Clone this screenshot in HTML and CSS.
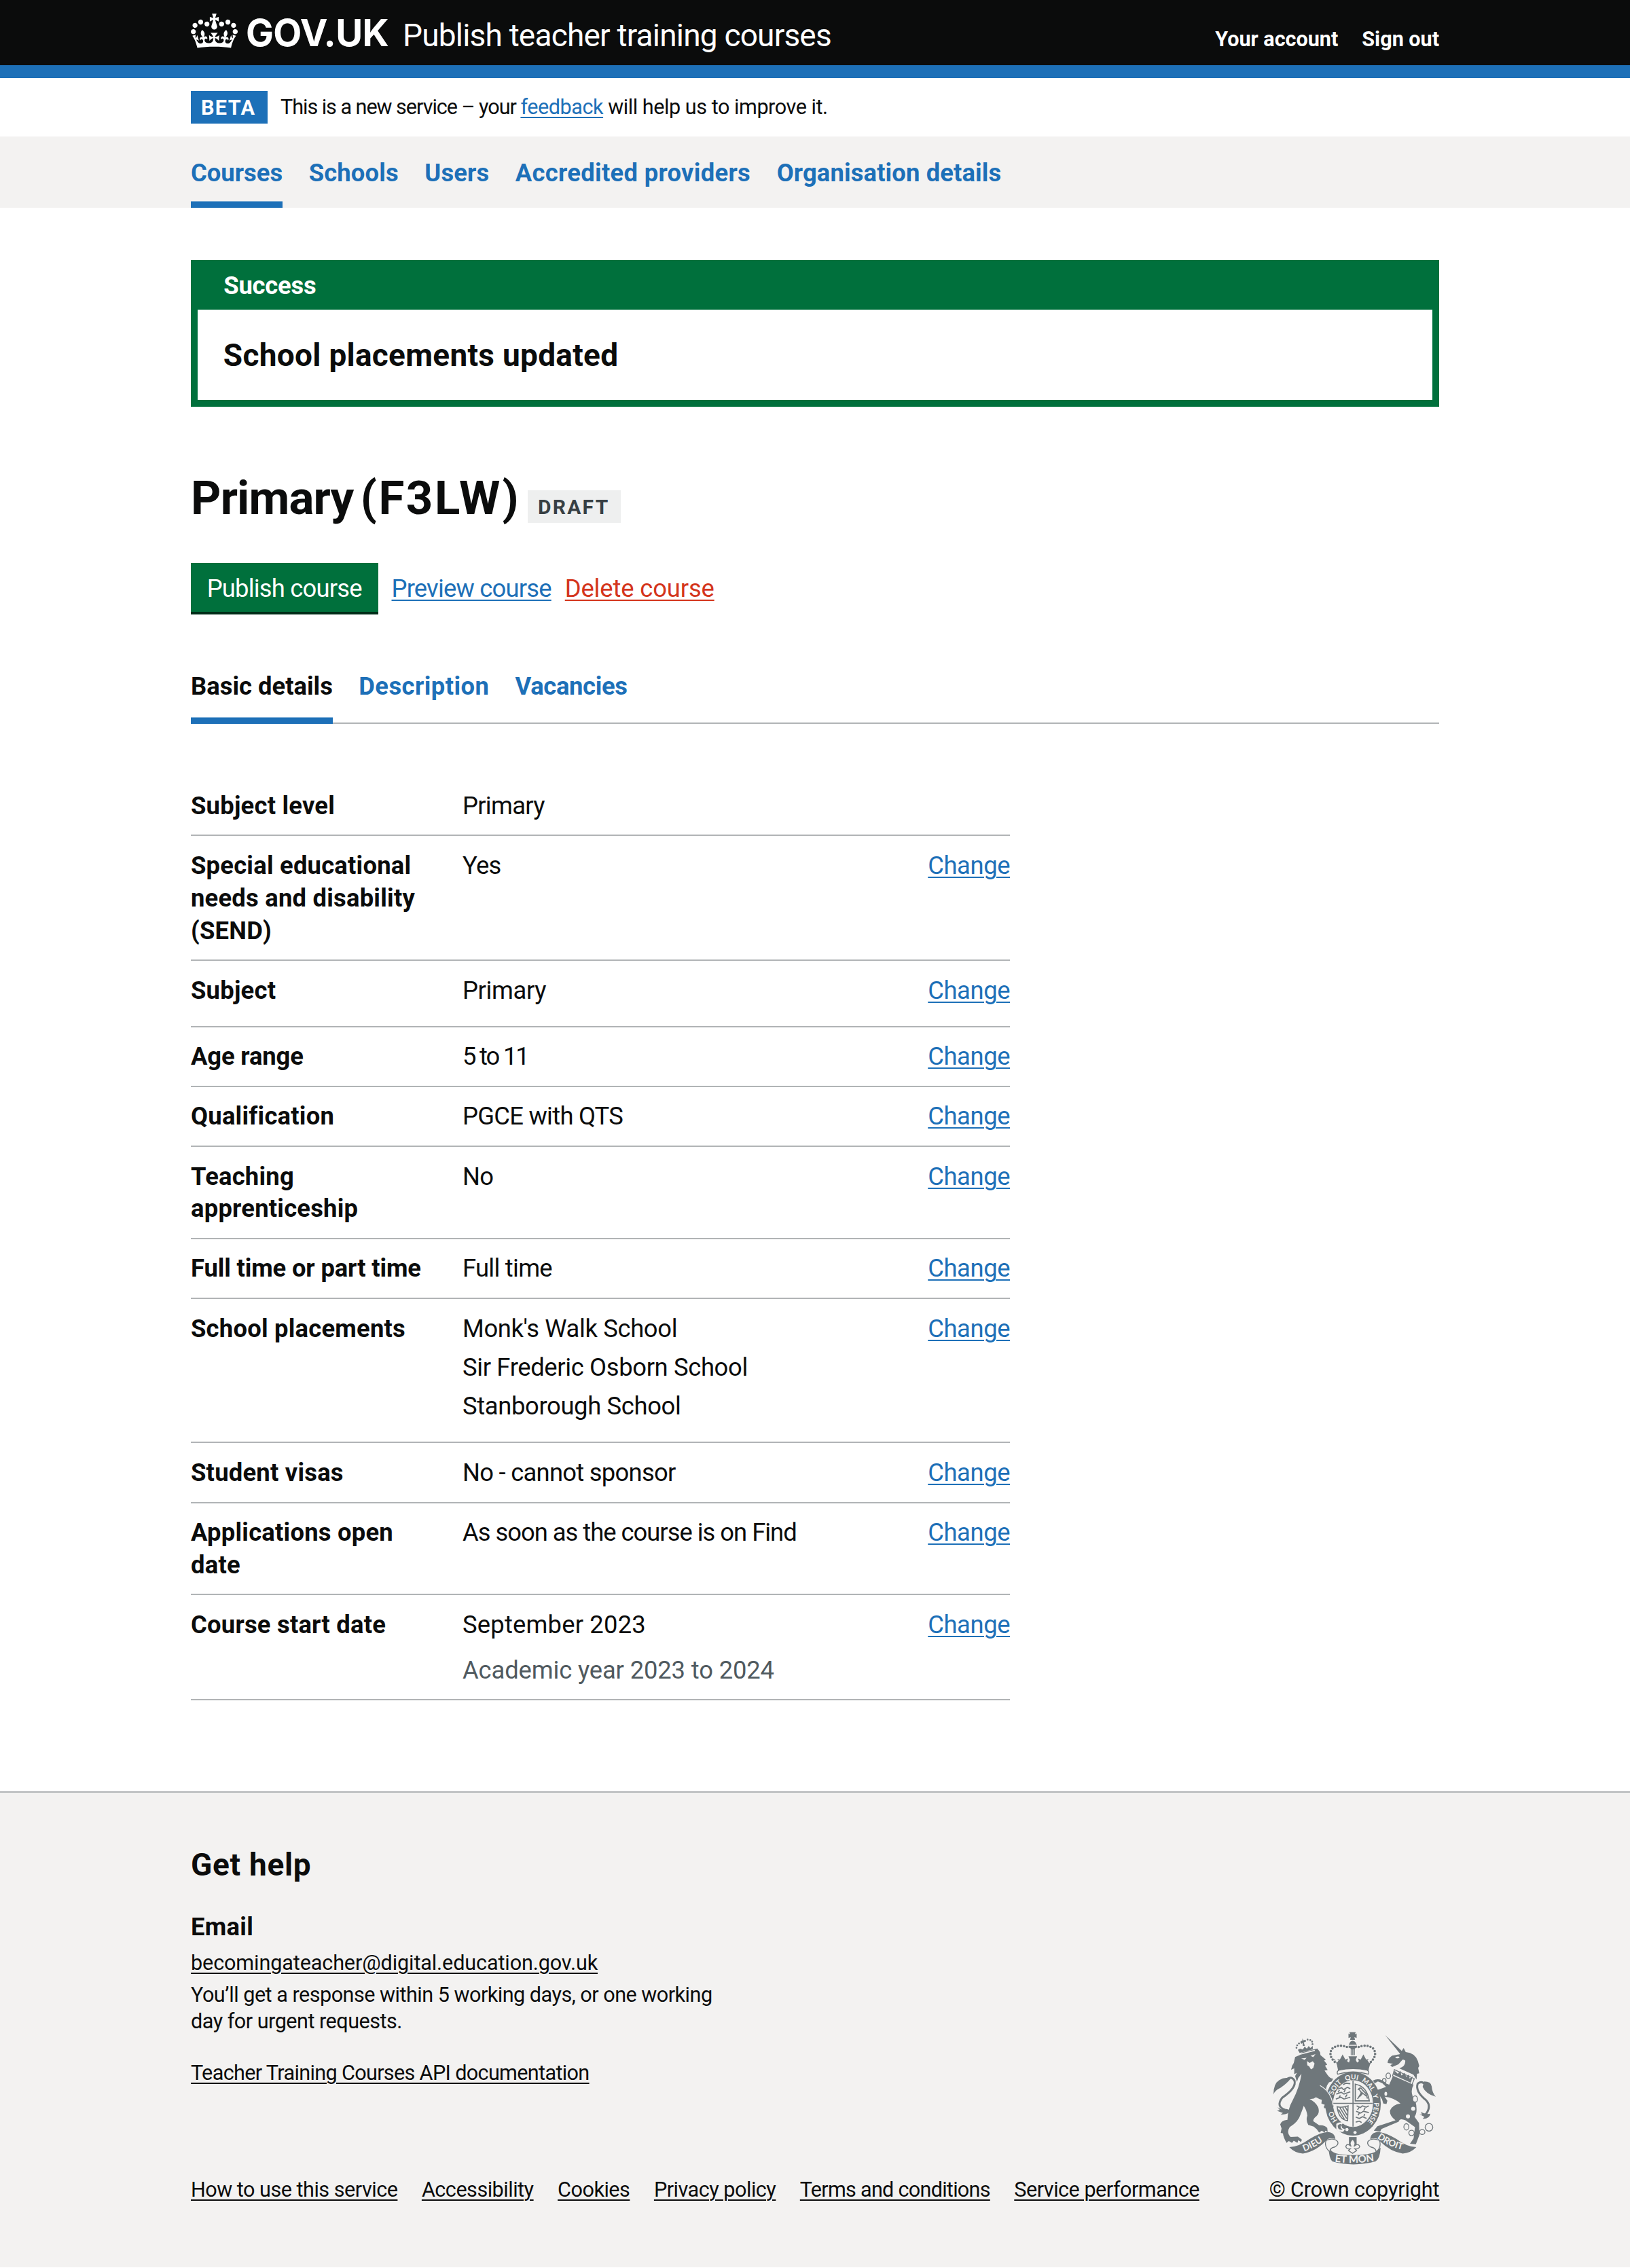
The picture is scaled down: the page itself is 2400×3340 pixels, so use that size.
FILE: index.html
```
<!DOCTYPE html>
<html lang="en">
<head>
<meta charset="utf-8">
<title>Primary (F3LW) – Publish teacher training courses – GOV.UK</title>
<link rel="stylesheet" href="styles.css">
</head>
<body>
<header class="header">
  <div class="container header__inner">
    <svg class="header__crown" viewBox="0 0 132 97" preserveAspectRatio="none" aria-hidden="true"><path fill="currentColor" fill-rule="evenodd" d="M25 30.2c3.5 1.5 7.7-.2 9.1-3.7 1.5-3.6-.2-7.8-3.9-9.2-3.6-1.4-7.6.3-9.1 3.9-1.4 3.5.3 7.5 3.9 9zM9 39.5c3.6 1.5 7.8-.2 9.2-3.7 1.5-3.6-.2-7.8-3.9-9.1-3.6-1.5-7.6.2-9.1 3.8-1.4 3.5.3 7.5 3.8 9zM4.4 57.2c3.5 1.5 7.7-.2 9.1-3.8 1.5-3.6-.2-7.7-3.9-9.1-3.5-1.5-7.6.3-9.1 3.8-1.4 3.5.3 7.6 3.9 9.1zm38.3-21.4c3.5 1.5 7.7-.2 9.1-3.8 1.5-3.6-.2-7.7-3.9-9.1-3.6-1.5-7.6.3-9.1 3.8-1.3 3.6.4 7.7 3.9 9.1zm64.4-5.6c-3.6 1.5-7.8-.2-9.1-3.7-1.5-3.6.2-7.8 3.8-9.2 3.6-1.4 7.7.3 9.2 3.9 1.3 3.5-.4 7.5-3.9 9zm15.9 9.3c-3.6 1.5-7.7-.2-9.1-3.7-1.5-3.6.2-7.8 3.7-9.1 3.6-1.5 7.7.2 9.2 3.8 1.5 3.5-.3 7.5-3.8 9zm4.7 17.7c-3.6 1.5-7.8-.2-9.2-3.8-1.5-3.6.2-7.7 3.9-9.1 3.6-1.5 7.7.3 9.2 3.8 1.3 3.5-.4 7.6-3.9 9.1zM89.3 35.8c-3.6 1.5-7.8-.2-9.2-3.8-1.4-3.6.2-7.7 3.9-9.1 3.6-1.5 7.7.3 9.2 3.8 1.4 3.6-.3 7.7-3.9 9.1zM69.7 17.7l8.9 4.7V9.3l-8.9 2.8c-.2-.3-.5-.6-.9-.9L72.4 0H59.6l3.5 11.2c-.3.3-.6.5-.9.9l-8.8-2.8v13.1l8.8-4.7c.3.3.6.7.9.9l-5 15.4v.1c-.2.8-.4 1.6-.4 2.4 0 4.1 3.1 7.5 7 8.1h.2c.3 0 .7.1 1 .1.4 0 .7 0 1-.1h.2c4-.6 7.1-4.1 7.1-8.1 0-.8-.1-1.7-.4-2.4V34l-5.1-15.4c.4-.2.7-.6 1-.9zM66 92.8c16.9 0 32.8 1.1 47.1 3.2 4-16.9 8.9-26.7 14-33.5l-9.6-3.4c1 4.9 1.1 7.2 0 10.2-1.5-1.4-3-4.3-4.2-8.7L108.6 76c2.8-2 5-3.2 7.5-3.3-4.4 9.4-10 11.9-13.6 11.2-4.3-.8-6.3-4.6-5.6-7.9 1-4.7 5.7-5.9 8-.5 4.3-8.7-3-11.4-7.6-8.8 7.1-7.2 7.9-13.5 2.1-21.1-8 6.1-8.1 12.3-4.5 20.8-4.7-5.4-12.1-2.5-9.5 6.2 3.4-5.2 7.9-2 7.2 3.1-.6 4.3-6.4 7.8-13.5 7.2-10.3-.9-10.9-8-11.2-13.8 2.5-.5 7.1 1.8 11 7.3L80.2 60c-4.1 4.4-8 5.3-12.3 5.4 1.4-4.4 8-11.6 8-11.6H55.5s6.4 7.2 7.9 11.6c-4.2-.1-8-1-12.3-5.4l1.4 16.4c3.9-5.5 8.5-7.7 10.9-7.3-.3 5.8-.9 12.8-11.1 13.8-7.2.6-12.9-2.9-13.5-7.2-.7-5 3.8-8.3 7.1-3.1 2.7-8.7-4.6-11.6-9.4-6.2 3.7-8.5 3.6-14.7-4.6-20.8-5.8 7.6-5 13.9 2.2 21.1-4.7-2.6-11.9.1-7.7 8.8 2.3-5.5 7.1-4.2 8.1.5.7 3.3-1.3 7.1-5.7 7.9-3.5.7-9-1.8-13.5-11.2 2.5.1 4.7 1.3 7.5 3.3l-4.7-15.4c-1.2 4.4-2.7 7.2-4.3 8.7-1.1-3-.9-5.3 0-10.2l-9.5 3.4c5 6.9 9.9 16.7 14 33.5 14.8-2.1 30.8-3.2 47.7-3.2z"/></svg>
    <span class="header__logo">GOV.UK</span>
    <span class="header__service">Publish teacher training courses</span>
    <nav class="header__account"><a>Your account</a><a>Sign out</a></nav>
  </div>
</header>

<div class="container phase">
  <strong class="tag tag--beta">BETA</strong>
  <span class="phase__text"><span class="phase__lead">This is a new service – your </span><a class="link">feedback</a> will help us to improve it.</span>
</div>

<nav class="primary-nav">
  <div class="container primary-nav__list">
    <a class="primary-nav__item primary-nav__item--current">Courses</a>
    <a class="primary-nav__item">Schools</a>
    <a class="primary-nav__item">Users</a>
    <a class="primary-nav__item primary-nav__item--wide">Accredited providers</a>
    <a class="primary-nav__item">Organisation details</a>
  </div>
</nav>

<main class="container">
  <section class="banner">
    <h2 class="banner__title">Success</h2>
    <p class="banner__content">School placements updated</p>
  </section>

  <div class="title">
    <h1 class="title__text">Primary <span class="title__code">(F3LW)</span></h1>
    <strong class="tag tag--draft">DRAFT</strong>
  </div>

  <div class="actions">
    <a class="button">Publish course</a>
    <a class="link">Preview course</a>
    <a class="link link--warning">Delete course</a>
  </div>

  <nav class="tabs">
    <a class="tabs__item tabs__item--current">Basic details</a>
    <a class="tabs__item tabs__item--wide">Description</a>
    <a class="tabs__item tabs__item--tight">Vacancies</a>
  </nav>

  <dl class="summary">
    <div class="summary__row"><dt>Subject level</dt><dd>Primary</dd></div>
    <div class="summary__row"><dt>Special educational needs and disability (SEND)</dt><dd>Yes</dd><dd><a class="link">Change</a></dd></div>
    <div class="summary__row"><dt>Subject</dt><dd><ul class="list"><li>Primary</li></ul></dd><dd><a class="link">Change</a></dd></div>
    <div class="summary__row"><dt class="summary__key--tight">Age range</dt><dd class="summary__numbers">5 to 11</dd><dd><a class="link">Change</a></dd></div>
    <div class="summary__row"><dt>Qualification</dt><dd>PGCE with QTS</dd><dd><a class="link">Change</a></dd></div>
    <div class="summary__row"><dt>Teaching apprenticeship</dt><dd>No</dd><dd><a class="link">Change</a></dd></div>
    <div class="summary__row"><dt class="summary__key--tight">Full time or part time</dt><dd>Full time</dd><dd><a class="link">Change</a></dd></div>
    <div class="summary__row"><dt>School placements</dt><dd><ul class="list"><li>Monk's Walk School</li><li>Sir Frederic Osborn School</li><li>Stanborough School</li></ul></dd><dd><a class="link">Change</a></dd></div>
    <div class="summary__row"><dt>Student visas</dt><dd>No - cannot sponsor</dd><dd><a class="link">Change</a></dd></div>
    <div class="summary__row"><dt>Applications open date</dt><dd class="summary__tight">As soon as the course is on Find</dd><dd><a class="link">Change</a></dd></div>
    <div class="summary__row"><dt>Course start date</dt><dd class="summary__date">September 2023<p class="hint">Academic year 2023 to 2024</p></dd><dd><a class="link">Change</a></dd></div>
  </dl>
</main>

<footer class="footer">
  <div class="container footer__inner">
    <div class="footer__main">
      <h2 class="footer__heading">Get help</h2>
      <h3 class="footer__subheading">Email</h3>
      <p class="footer__email"><a class="link link--plain">becomingateacher@digital.education.gov.uk</a></p>
      <p class="footer__note">You’ll get a response within 5 working days, or one working<br>day for urgent requests.</p>
      <p class="footer__api"><a class="link link--plain">Teacher Training Courses API documentation</a></p>
      <nav class="footer__links">
        <a class="link link--plain">How to use this service</a>
        <a class="link link--plain">Accessibility</a>
        <a class="link link--plain">Cookies</a>
        <a class="link link--plain">Privacy policy</a>
        <a class="link link--plain footer__link--tight">Terms and conditions</a>
        <a class="link link--plain">Service performance</a>
      </nav>
    </div>
    <div class="footer__crown">
      <svg class="crest" viewBox="162 92 718 590" aria-hidden="true">
        <defs>
          <path id="garter" d="M449 488A93 108 0 1 1 579 488"/>
          <path id="dieu" d="M298 622Q345 606 400 564"/>
          <path id="etmon" d="M433 667Q514 678 604 665"/>
          <path id="droit" d="M620 562Q675 604 746 618"/>
        </defs>
        <!-- lion -->
        <g class="crest__fill">
          <path d="M258 204l20-8 10-12 68-18 12 16 2 14 24 20-8 4 14 18-10 4 12 20-14 2 14 20q10 14 24 16l-6 12-12 4q-12 14-14 30 20 20 24 42 8 16 8 40l-10 6-8-10-6 8-18-6 6-12-14-4 2-16-12-4-16-8-10 6-18 2q26 12 38 36 8 26-8 40-14 10-14 22l26 18q24-2 36 12l2 18-10-6-4 8-12-8-12 8-10-14-14-12-24-8q-12-22-4-40-2-24-16-44-6 18-14 38-10 34-48 56-16 24 4 44l32-2 18 14-4 10-12-8-4 12-16-10-8 10-14-8-10 8q-14-24-16-42l-10-2 4-20-6-18q6-18 32-20 2-50 22-84 32-62 40-120l-14 18-6 18-8-26 8-14-12 6 0-26-14 6q2-18 12-30z"/>
          <path d="M162 370q0-48 26-64 26-16 50-6-16 20-44 40-26 12-32 30z"/>
          <path d="M238 440q-14 22-44 18l10-6-26-10 12-4-10-12q24 16 40 8z"/>
        </g>
        <path class="crest__line" d="M215 438q-44-14-14-54 64-44 54-76-16-26-44 2"/>
        <g class="crest__fill">
          <path d="M270 172l8 14 58-16 0-15-11 9-7-9-8 12-10-9-8 13-12-4z"/>
          <circle cx="264" cy="163" r="4"/><circle cx="267" cy="152" r="4"/><circle cx="275" cy="144" r="4"/><circle cx="286" cy="141" r="4"/><circle cx="302" cy="133" r="4"/><circle cx="313" cy="127" r="4"/><circle cx="325" cy="129" r="4"/><circle cx="333" cy="136" r="4"/><circle cx="335" cy="147" r="4"/>
          <path d="M290 122l5 8 8-2 0 9-7 2 5 15-9 2-1-15-9 1 0-8 8-2z"/>
        </g>
        <path class="crest__paper" d="M278 190l66-18 2 5-66 17zM285 211l24-3-9 9zM326 199l22-8-10 14zM310 222l12 8 14-7 8 10-6 20-10 6-8-14-8-4z"/>
        <!-- unicorn -->
        <g class="crest__fill">
          <path d="M656 107l78 74-12 9z"/>
          <path d="M720 192l18-28 9 18q42 4 54 40l6 22-5 8 5 24-10 2-2 26-14-22-62-28q28-8 26-34-8-6-12-4l-18 20-28 12-8-8 12-6-24-4q0-18 20-32z"/>
          <path d="M692 286l90 40q-20 36 8 72 12 50-4 70l20 28 2 52-16 42-26-2 16-24 6-50-42-30q-26-12-30 6l-76 32-6 12-28-4 16-20 80-26q-28-20-24-44 10-24 46-30-30-26-70-30l12 18-4 14-14-2-6-20-26-38 44-16-16-16-20-8-14 8-8-12q32-16 60 14l12 4z"/>
          <path d="M828 312q32 0 34 22 2 28 18 46-44-12-58-44z"/>
          <path d="M856 455q-4 24-34 22l8-8-22-12 12 2-6-12q22 12 42 8z"/>
        </g>
        <path class="crest__line" d="M832 462q32-38 6-66-50-40-38-74 16-16 38 6"/>
        <path class="crest__band" d="M697 260l88 40-10 26-86-38z"/>
        <path class="crest__fill" d="M694 283l4-18 14 13 12-13 4 21 14-12 8 18 12-11 2 18 14-9-8 28z"/>
        <g class="crest__ring"><circle cx="850" cy="515" r="17"/><ellipse cx="820" cy="536" rx="12" ry="11"/><circle cx="773" cy="540" r="12"/><ellipse cx="750" cy="513" rx="11" ry="14"/><ellipse cx="789" cy="390" rx="10" ry="14"/><ellipse cx="670" cy="287" rx="10" ry="12"/><ellipse cx="652" cy="309" rx="8" ry="10"/></g>
        <g class="crest__paper"><circle cx="757" cy="467" r="9"/><circle cx="780" cy="433" r="9"/><ellipse cx="659" cy="367" rx="6" ry="9"/><ellipse cx="787" cy="390" rx="7" ry="11"/><path d="M700 206q16-8 20 0-10 8-20 0z"/></g>
        <!-- crown -->
        <g class="crest__fill">
          <path d="M498 94h28l-4 9 8-3v20l-10-4 3 12h-22l3-12-10 4v-20l8 3z"/>
          <path d="M494 162q0-26 18-30 20 4 20 30l-10 4v30h-18v-30zM428 215l16 14 6-10-6-6 12 2 12-22 12 22 12-4-4 12 8 6 4-12-6-16h38l-6 16 6 12 8-6-4-12 12 4 12-22 12 22 12-2-6 6 8 12 14-16q-18 30-18 62-66-22-132 0-4-36-16-64z"/>
        </g>
        <path class="crest__dots" d="M433 226q-30-30-12-58 30-26 76-4M593 226q30-30 12-58-30-26-76-4"/>
        <path class="crest__paper" d="M508 170h3v26h-3zM516 170h3v26h-3zM496 150h34v4h-34z"/>
        <!-- garter and shield -->
        <ellipse class="crest__fill" cx="514" cy="411" rx="123" ry="141"/>
        <path class="crest__cap" d="M446 280q-6-12 6-18 62-14 124 0 12 6 6 18-68-20-136 0z"/>
        <ellipse class="crest__shield" cx="514" cy="410" rx="87" ry="102"/>
        <g class="crest__quarters">
          <path d="M514 308v204M427 409h174"/>
          <path d="M446 346l18-6 8 8 18-10 12 6M440 368l22-8 12 8 28-10M438 390l22-8 14 8 28-8M470 326l12-6 20 2M454 350l-6 10M480 348l-6 12M458 374l-6 10M488 370l-8 12M530 420l16 8 10-8 16 6 12-6M528 444l20 8 12-8 24 6M526 470l16 6 14-8 18 8M526 492l16-4 10 6M540 428l-6 10M568 428l-6 12M542 452l-6 10M566 456l-4 10"/>
          <path d="M524 324q52 10 62 74h-62zM536 350q10-18 20 0l14 14 8 24M534 390l18-30 20 16M540 344l14 24-12 12"/>
          <path d="M444 424q18 6 48-4l-2 66q-40-6-46-62zM456 428l30 48M468 428l20 34M480 426l10 18M450 436l26 44"/>
        </g>
        <path class="crest__paper" d="M440 500q14-12 30-4l-8 10 4 12 12 6-8 12q-22 0-30-12z"/>
        <path class="crest__fill" d="M446 508q8-10 18-6-12 12 4 24-16 2-20-8z"/>
        <g class="crest__paper"><circle cx="487" cy="525" r="7"/><circle cx="523" cy="538" r="7"/></g>
        <path class="crest__fill" d="M384 340q36 26 38 60l6 22-6 12-10-10-8 10-18-4 4-14-16-6z"/>
        <path class="crest__cut" d="M368 330q50 28 58 88"/>
        <g class="crest__text crest__text--small">
          <text><textPath href="#garter" startOffset="5">HO</textPath></text>
          <text><textPath href="#garter" startOffset="122">SOIT</textPath></text>
          <text><textPath href="#garter" startOffset="208">QUI</textPath></text>
          <text><textPath href="#garter" startOffset="280">MAL</textPath></text>
          <text><textPath href="#garter" startOffset="359">Y</textPath></text>
          <text><textPath href="#garter" startOffset="394">PENSE</textPath></text>
        </g>
        <!-- motto ribbon -->
        <g class="crest__fill">
          <path d="M232 603q40 0 90-36 60-36 90-30 22 6 24 30-20-6-34 0-50 56-110 64-36-2-60-28z"/>
          <path d="M794 603q-40 0-88-36-60-36-92-30-22 6-24 30 20-6 34 0 50 56 110 64 36-2 60-28z"/>
          <path d="M406 604q14 26 50 30 58 8 116 0 46-4 64-30-2 50-22 62-100 26-192 0-14-14-16-62z"/>
          <path d="M496 558h34v36h-34z"/>
        </g>
        <g class="crest__ribbon"><path d="M396 572q34-12 50 6 6 14-12 24-24 4-22 22-18-14-20-34 0-12 4-18z"/><path d="M630 572q-34-12-50 6-6 14 12 24 24 4 24 22 18-14 18-34 0-12-4-18z"/><path d="M512 568q-18 14-6 32-18-18-24 0 4 14 20 10l-8 8 18 12 18-12-8-8q16 4 22-10-8-18-26 0 12-18-6-32z"/></g>
        <g class="crest__text">
          <text><textPath href="#dieu">DIEU</textPath></text>
          <text class="crest__text--large"><textPath href="#etmon">ET MON</textPath></text>
          <text><textPath href="#droit">DROIT</textPath></text>
        </g>
      </svg>
      <a class="link link--plain footer__copyright">© Crown copyright</a>
    </div>
  </div>
</footer>
</body>
</html>
```
FILE: styles.css
```
* { box-sizing: border-box; }

body, h1, h2, h3, p, ul, dl, dd { margin: 0; padding: 0; }

body {
  background: #fff;
  color: #0b0c0c;
  font-family: Roboto, "Liberation Sans", sans-serif;
  font-size: 36.4px;
  line-height: 47.87px;
  letter-spacing: -0.02em;
}

.container { width: 1838px; margin: 0 auto; }

.link {
  color: #1d70b8;
  text-decoration: underline;
  text-decoration-thickness: 2px;
  text-underline-offset: 4px;
}
.link--warning { color: #d4351c; letter-spacing: -0.004em; }
.link--plain { color: #0b0c0c; }

/* Header */
.header { height: 115px; background: #0b0c0c; border-bottom: 19px solid #1d70b8; color: #fff; }
.header__inner { display: flex; align-items: baseline; padding-top: 14px; }
.header__crown { width: 69px; height: 51px; align-self: flex-start; margin-top: 6px; }
.header__logo {
  margin-left: 12px;
  width: 231px;
  font-family: Inter, sans-serif;
  font-size: 54.6px;
  line-height: 68px;
  font-weight: 700;
  letter-spacing: -0.011em;
}
.header__service { font-size: 46px; line-height: 57px; letter-spacing: -0.0175em; }
.header__account {
  display: flex;
  gap: 35px;
  margin-left: auto;
  font-size: 30.6px;
  font-weight: 700;
  letter-spacing: -0.001em;
}

/* Phase banner */
.phase { display: flex; align-items: center; height: 86px; font-size: 30.6px; line-height: 38.3px; }
.tag { display: inline-block; height: 48px; line-height: 48px; padding: 1px 15px 0; font-size: 30.6px; }
.tag--beta { width: 113px; background: #1d70b8; color: #fff; letter-spacing: 0.044em; }
.tag--draft { width: 137px; background: #eeefef; color: #383f43; font-size: 30px; letter-spacing: 0.075em; }
.phase__text { margin-left: 19px; padding-top: 1px; letter-spacing: -0.015em; }
.phase__lead { letter-spacing: -0.034em; }

/* Primary navigation */
.primary-nav { background: #f3f2f1; font-weight: 700; letter-spacing: 0.12px; }
.primary-nav__list { display: flex; gap: 38.6px; }
.primary-nav__item { height: 105px; padding-top: 30px; color: #1d70b8; }
.primary-nav__item--current { box-shadow: inset 0 -9.5px #1d70b8; letter-spacing: 0; }
.primary-nav__item--wide { letter-spacing: 0.008em; }

/* Notification banner */
.banner { margin-top: 77px; padding: 0 9.57px 9.57px; background: #00703c; }
.banner__title {
  padding: 14.2px 29px 10.5px 38.7px;
  color: #fff;
  font-size: 36.4px;
  letter-spacing: -0.006em;
}
.banner__content {
  padding: 39px 38.3px 37.4px;
  background: #fff;
  font-size: 46px;
  line-height: 57.4px;
  font-weight: 700;
  letter-spacing: 0.006em;
}

/* Page title */
.title { display: flex; align-items: baseline; margin-top: 97.5px; }
.title__text { width: 496px; font-size: 69px; line-height: 76.6px; letter-spacing: -0.012em; word-spacing: -6px; white-space: nowrap; }
.title__code { letter-spacing: 0.036em; }

.actions { display: flex; align-items: baseline; gap: 20px; margin-top: 55.5px; letter-spacing: -0.022em; }
.button {
  width: 275.5px;
  padding: 20.4px 0 16px;
  background: #00703c;
  box-shadow: 0 3.8px #002d18;
  color: #fff;
  line-height: 36.4px;
  text-align: center;
}

/* Tabs */
.tabs {
  display: flex;
  gap: 38.3px;
  margin-top: 55.5px;
  box-shadow: inset 0 -2px #b1b4b6;
  font-weight: 700;
  letter-spacing: 0;
}
.tabs__item { height: 109.5px; padding-top: 30.2px; color: #1d70b8; }
.tabs__item--current { color: #0b0c0c; box-shadow: inset 0 -9.5px #1d70b8; }
.tabs__item--wide { letter-spacing: 0.012em; }
.tabs__item--tight { letter-spacing: -0.01em; }

/* Summary list */
.summary { width: 1206px; margin-top: 77px; }
.summary__row {
  display: grid;
  grid-template-columns: 361px 600px 1fr;
  column-gap: 39px;
  padding: 19.6px 0 18.6px;
  border-bottom: 2px solid #b1b4b6;
}
.summary__row dt { font-weight: 700; letter-spacing: 0.006em; }
.summary__row .summary__key--tight { letter-spacing: -0.004em; }
.summary__row dd:nth-child(3) { text-align: right; letter-spacing: -0.012em; }
.summary__tight { letter-spacing: -0.028em; }
.summary__numbers { letter-spacing: -0.06em; }
.summary__date { letter-spacing: 0.005em; }
.list { list-style: none; letter-spacing: -0.01em; }
.list li { margin-bottom: 9.57px; }
.hint { margin-top: 19.1px; color: #505a5f; letter-spacing: -0.004em; }

/* Footer */
.footer { height: 701px; margin-top: 134px; padding-top: 77.2px; background: #f3f2f1; border-top: 2px solid #b1b4b6; font-size: 30.6px; line-height: 38.3px; }
.footer__inner { display: flex; justify-content: space-between; align-items: flex-end; }
.footer__heading { font-size: 46px; line-height: 57.4px; letter-spacing: 0.015em; }
.footer__subheading { margin-top: 38.6px; font-size: 36.4px; line-height: 47.87px; letter-spacing: 0.008em; }
.footer__email { margin-top: 10.3px; letter-spacing: -0.004em; }
.footer__note { margin-top: 9.2px; letter-spacing: -0.0166em; }
.footer__api { margin-top: 38.4px; letter-spacing: -0.0215em; }
.footer__links { display: flex; gap: 35.5px; margin-top: 133.7px; letter-spacing: -0.5px; white-space: nowrap; }
.footer__link--tight { letter-spacing: -0.73px; }
.footer__crown { display: flex; flex-direction: column; align-items: center; gap: 18px; width: 250px; white-space: nowrap; }
.footer__copyright { letter-spacing: -0.005em; }

/* Royal coat of arms */
.crest { width: 239px; height: 196.4px; }
.crest__fill { fill: #6f777b; }
.crest__paper { fill: #f3f2f1; }
.crest__line { fill: none; stroke: #6f777b; stroke-width: 9; }
.crest__band, .crest__cap { fill: #f3f2f1; stroke: #6f777b; stroke-width: 4; }
.crest__cut { fill: none; stroke: #f3f2f1; stroke-width: 4; }
.crest__ring { fill: none; stroke: #6f777b; stroke-width: 4; }
.crest__dots { fill: none; stroke: #6f777b; stroke-width: 11; stroke-linecap: round; stroke-dasharray: 0 13.5; }
.crest__shield { fill: #f3f2f1; stroke: #f3f2f1; stroke-width: 3; }
.crest__quarters { fill: none; stroke: #6f777b; stroke-width: 5; }
.crest__ribbon { fill: #f3f2f1; stroke: #6f777b; stroke-width: 4; }
.crest__text { fill: #f3f2f1; font: 700 40px Lato, sans-serif; letter-spacing: 0; }
.crest__text--large { font-size: 45px; }
.crest__text--small { font-size: 30px; }
```
